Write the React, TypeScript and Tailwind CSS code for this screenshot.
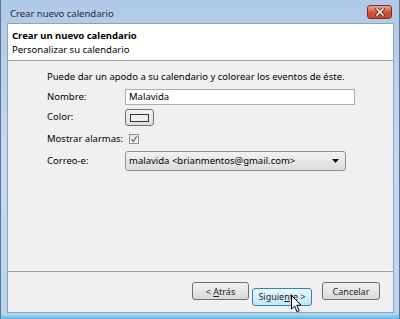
import React from "react";

const font = { fontFamily: '"Noto Sans", "Open Sans", sans-serif' };

const Btn = ({ children, active, className }: { children: React.ReactNode; active?: boolean; className?: string }) => (
  <button
    className={
      "h-[18px] rounded-[3px] border text-[9px] leading-none text-[#1e1e1e] " +
      (active
        ? "border-[#3c7fb1] bg-gradient-to-b from-[#eaf6fd] to-[#bee6fd] "
        : "border-[#707070] bg-gradient-to-b from-[#f2f2f2] to-[#d9d9d9] ") +
      (className || "")
    }
  >
    {children}
  </button>
);

const App = () => {
  return (
    <div style={font} className="w-[400px] h-[319px] flex flex-col overflow-hidden border-l border-r border-[#5a7594] bg-gradient-to-b from-[#b0c9e6] via-[#c6daef] to-[#b9d4ee]">
      {/* barra de título */}
      <div className="h-[23px] flex items-start justify-between pl-[9px] pr-[7px]">
        <span className="mt-[9px] text-[9.5px] leading-none text-[#1b2b3c]">Crear nuevo calendario</span>
        <div className="mt-[5px] w-[25px] h-[14px] rounded-[3px] border border-[#7a2f22] bg-gradient-to-b from-[#e8a696] via-[#d0553c] to-[#c0452a] flex items-center justify-center">
          <svg width="10" height="8" viewBox="0 0 10 8">
            <path d="M2 1 L8 7 M8 1 L2 7" stroke="#4a1a10" strokeWidth="3" strokeLinecap="square" />
            <path d="M2 1 L8 7 M8 1 L2 7" stroke="#ffffff" strokeWidth="1.6" strokeLinecap="square" />
          </svg>
        </div>
      </div>

      {/* area cliente */}
      <div className="flex-1 ml-[6px] mr-[5px] flex flex-col border border-[#8da4be] bg-[#f0f0f0]">
        <div className="h-[37px] bg-white border-b border-[#a0a0a0] pl-[4px] pt-[5px] flex flex-col text-[9.5px] text-black">
          <span className="font-bold leading-[14px]">Crear un nuevo calendario</span>
          <span className="leading-[14px]">Personalizar su calendario</span>
        </div>

        <div className="flex-1 flex flex-col pl-[39px] pt-[9px] text-[9.5px] text-black">
          <span className="leading-[14px] h-[14px]">Puede dar un apodo a su calendario y colorear los eventos de éste.</span>
          <div className="mt-[5px] h-[16px] flex items-center">
            <span className="w-[78px]">Nombre:</span>
            <div className="w-[230px] h-[16px] bg-white border border-[#abadb3] flex items-center pl-[3px]">Malavida</div>
          </div>
          <div className="mt-[4px] h-[17px] flex items-center">
            <span className="w-[78px]">Color:</span>
            <div className="w-[29px] h-[17px] rounded-[3px] border border-[#707070] bg-gradient-to-b from-[#f4f4f4] to-[#dcdcdc] flex items-center justify-center">
              <div className="w-[19px] h-[8px] border border-[#333] bg-[#f0f0f0]" />
            </div>
          </div>
          <div className="mt-[4px] h-[18px] flex items-center">
            <span className="w-[82px]">Mostrar alarmas:</span>
            <div className="w-[10px] h-[10px] border border-[#8f8f8f] bg-gradient-to-b from-[#e4e4e4] to-[#f8f8f8] flex items-center justify-center">
              <svg width="8" height="8" viewBox="0 0 8 8">
                <path d="M1.5 4.2 L3.2 6.5 L6.8 1.2" stroke="#4a5f97" strokeWidth="1.1" fill="none" />
              </svg>
            </div>
          </div>
          <div className="mt-[3px] h-[20px] flex items-center">
            <span className="w-[78px]">Correo-e:</span>
            <div className="w-[221px] h-[20px] rounded-[3px] border border-[#8e8f8f] bg-gradient-to-b from-[#f2f2f2] to-[#dcdcdc] flex items-center justify-between pl-[3px] pr-[6px]">
              <span>malavida &lt;brianmentos@gmail.com&gt;</span>
              <svg width="7" height="4" viewBox="0 0 7 4">
                <path d="M0 0 H7 L3.5 4 Z" fill="#111" />
              </svg>
            </div>
          </div>
        </div>

        <div className="h-[41px] border-t border-[#a0a0a0] flex items-start justify-end pt-[10px] pr-[13px]">
          <Btn className="w-[57px]">
            &lt; <span className="underline">A</span>trás
          </Btn>
          <div className="relative ml-[3px]">
            <Btn active className="w-[60px]">
              Siguie<span className="underline">n</span>te &gt;
            </Btn>
            <svg className="absolute left-[39px] top-[13px]" width="11" height="18" viewBox="0 0 11 18">
              <path d="M0.5 0.5 V14 L3.6 11 L6 16.8 L8.2 15.8 L5.8 10.2 H10 Z" fill="#fff" stroke="#000" strokeWidth="1" strokeLinejoin="round" />
            </svg>
          </div>
          <Btn className="w-[58px] ml-[10px]">Cancelar</Btn>
        </div>
      </div>

      <div className="h-[6px] bg-gradient-to-b from-[#b9dcf2] to-[#5db7e6]" />
    </div>
  );
};

export default App;
